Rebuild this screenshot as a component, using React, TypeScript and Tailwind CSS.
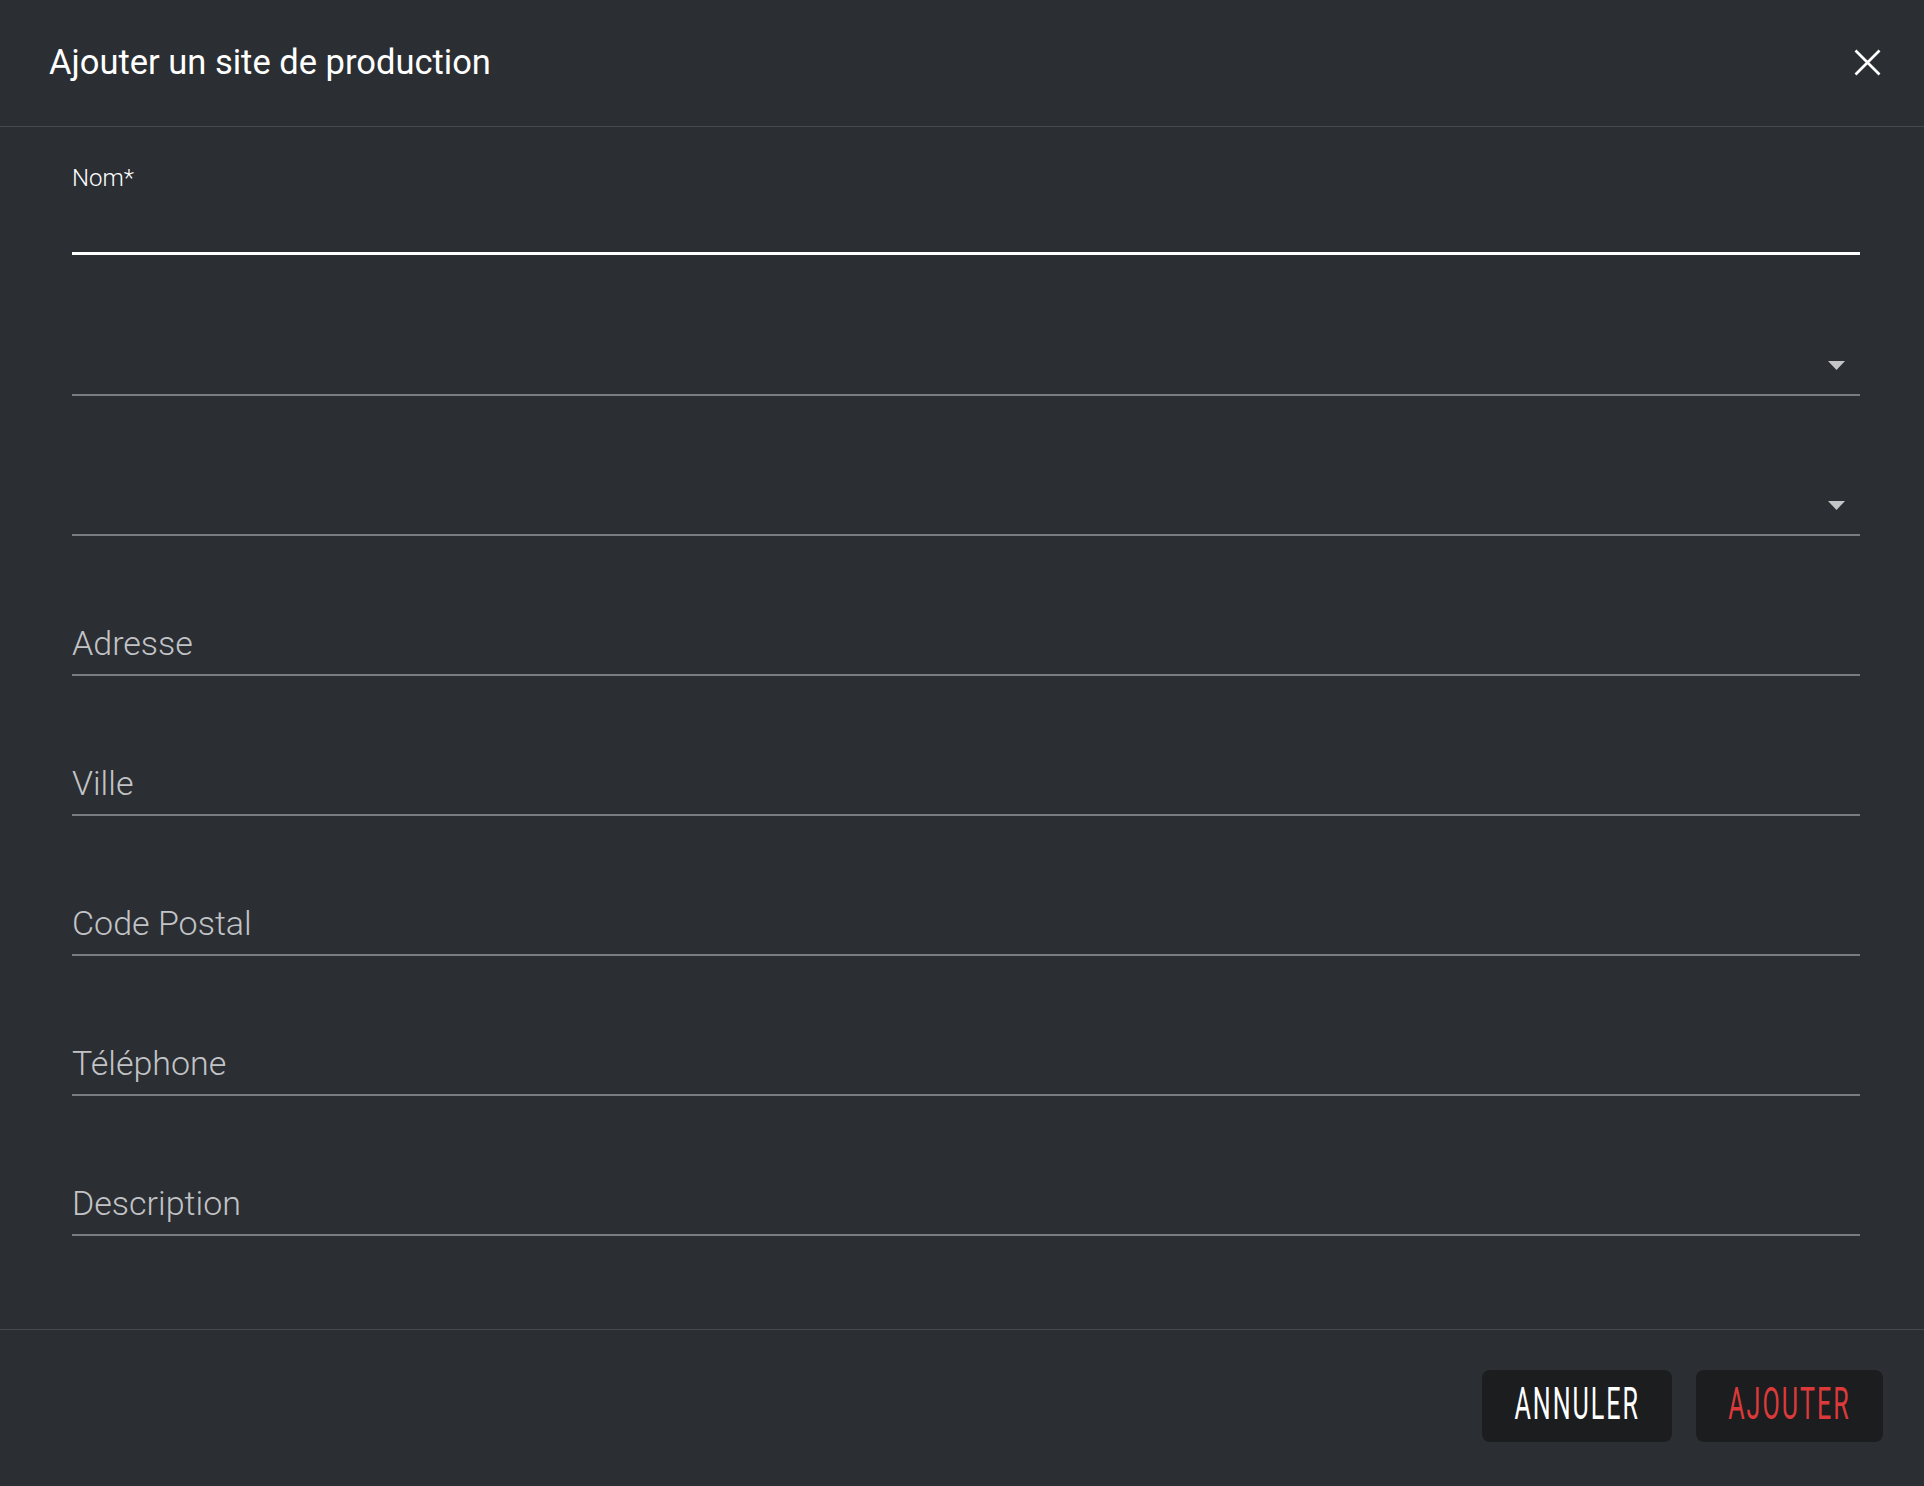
import React from "react";

const textFields = ["Adresse", "Ville", "Code Postal", "Téléphone", "Description"];

function Caret() {
  return (
    <svg width="17" height="9" viewBox="0 0 17 9" className="mb-[24px] mr-[15px]">
      <path d="M0 0h17L8.5 9z" fill="#c4c5c7" />
    </svg>
  );
}

export default function App() {
  return (
    <div className="min-h-screen flex flex-col bg-[#2b2e33] text-white font-['Roboto',sans-serif]">
      {/* Header */}
      <header className="h-[127px] flex items-center justify-between pl-[49px] pr-[43px] pb-[2px] border-b border-[#45484d]">
        <h1 className="text-[34.5px] font-normal leading-none">Ajouter un site de production</h1>
        <button className="text-white">
          <svg width="27" height="27" viewBox="0 0 27 27">
            <path d="M1.5 1.5l24 24M25.5 1.5l-24 24" stroke="#ffffff" strokeWidth="2.7" />
          </svg>
        </button>
      </header>

      {/* Form */}
      <div className="flex-1 pl-[72px] pr-[64px]">
        <div className="h-[128px] flex flex-col">
          <label className="pt-[37px] text-[24px] leading-[28px] font-light text-white">Nom*</label>
          <div className="flex-1" />
          <div className="h-[3px] bg-white" />
        </div>

        <div className="h-[141px] flex items-end justify-end border-b-2 border-[#7b7c7f]">
          <Caret />
        </div>
        <div className="h-[140px] flex items-end justify-end border-b-2 border-[#7b7c7f]">
          <Caret />
        </div>

        {textFields.map((f) => (
          <div key={f} className="h-[140px] flex items-end border-b-2 border-[#7b7c7f]">
            <span className="pb-[11px] text-[34px] leading-[40px] font-light text-[#c2c3c6]">{f}</span>
          </div>
        ))}
      </div>

      {/* Footer */}
      <footer className="h-[157px] flex items-start justify-end gap-[24px] pt-[40px] pr-[41px] border-t border-[#45484d]">
        <button className="w-[190px] h-[72px] pb-[4px] rounded-[8px] bg-[#1c1d1f] flex items-center justify-center">
          <span className="inline-block scale-x-[0.57] text-[44px] leading-none font-normal tracking-[0.08em] text-white">
            ANNULER
          </span>
        </button>
        <button className="w-[187px] h-[72px] pb-[4px] rounded-[8px] bg-[#1c1d1f] flex items-center justify-center">
          <span className="inline-block scale-x-[0.57] text-[44px] leading-none font-normal tracking-[0.08em] text-[#dc3a3a]">
            AJOUTER
          </span>
        </button>
      </footer>
    </div>
  );
}
